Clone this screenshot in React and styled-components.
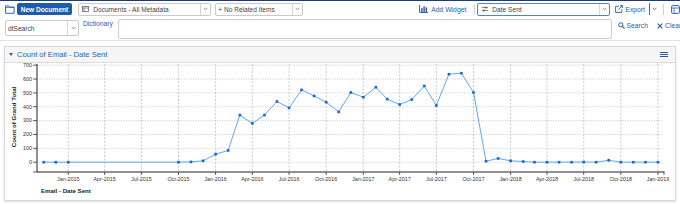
import React from 'react';
import styled, { createGlobalStyle } from 'styled-components';

const GlobalStyle = createGlobalStyle`
  html, body { margin: 0; padding: 0; background: #fff; }
  body {
    font-family: "Liberation Sans", Arial, sans-serif;
    width: 680px;
    height: 204px;
    overflow: hidden;
  }
`;

const BLUE = '#2b5ea8';

const Page = styled.div`
  width: 680px;
  height: 204px;
  overflow: hidden;
  box-sizing: border-box;
  border-top: 1px solid #1d3c73;
`;

const TopRow = styled.div`
  display: flex;
  align-items: center;
  height: 16px;
  padding-left: 5px;
  white-space: nowrap;
`;

const SearchRow = styled.div`
  display: flex;
  align-items: flex-start;
  height: 23px;
  padding-left: 5px;
  border-bottom: 1px solid #e2e2e2;
  white-space: nowrap;
`;

const PrimaryButton = styled.button`
  margin-left: 2px;
  width: 57px;
  height: 12px;
  padding: 0;
  border: none;
  border-radius: 2px;
  background: #1d5bab;
  color: #fff;
  font: bold 6.6px "Liberation Sans", Arial, sans-serif;
`;

const SelectBox = styled.div`
  display: flex;
  align-items: stretch;
  box-sizing: border-box;
  flex: none;
  width: ${p => p.$w}px;
  height: ${p => p.$h || 13}px;
  margin-left: ${p => p.$ml || 0}px;
  margin-top: ${p => p.$mt || 0}px;
  border: 1px solid ${p => (p.$active ? '#5581c6' : '#cacaca')};
  border-radius: 2px;
  background: #fff;
`;

const SelectLabel = styled.div`
  flex: 1;
  display: flex;
  align-items: center;
  gap: 4px;
  padding-left: ${p => p.$pl || 3}px;
  font-size: 6.6px;
  color: #444;
  overflow: hidden;
`;

const SelectArrow = styled.div`
  width: ${p => p.$w || 9}px;
  border-left: 1px solid #d4d4d4;
  display: flex;
  align-items: center;
  justify-content: center;
`;

const LinkAction = styled.div`
  display: flex;
  align-items: center;
  gap: ${p => p.$gap || 2}px;
  margin-left: ${p => p.$ml || 0}px;
  margin-top: ${p => p.$mt || 0}px;
  height: ${p => p.$h || 'auto'};
  font-size: 6.8px;
  color: ${BLUE};
  flex: none;
`;

const Divider = styled.div`
  width: 1px;
  height: ${p => p.$h || 10}px;
  margin-left: ${p => p.$ml || 0}px;
  background: ${p => p.$color || '#d0d0d0'};
  flex: none;
`;

const DictLink = styled.div`
  width: 35px;
  margin-left: 4px;
  margin-top: 3px;
  line-height: 8px;
  font-size: 6.7px;
  color: ${BLUE};
  flex: none;
`;

const QueryBox = styled.div`
  box-sizing: border-box;
  width: 494px;
  height: 20px;
  border: 1px solid #cdcdcd;
  border-radius: 2px;
  flex: none;
`;

const Panel = styled.section`
  box-sizing: border-box;
  width: 672px;
  height: 155px;
  margin: 5px 0 0 4px;
  border: 1px solid #d8d8d8;
  box-shadow: 0 1px 2px rgba(0, 0, 0, 0.12);
  display: flex;
  flex-direction: column;
`;

const PanelHeader = styled.header`
  display: flex;
  align-items: center;
  height: 15px;
  padding: 0 7px 0 4px;
  background: #f5f5f5;
  border-bottom: 1px solid #dcdcdc;
  flex: none;
`;

const PanelTitle = styled.div`
  display: flex;
  align-items: center;
  gap: 4px;
  flex: 1;
  font-size: 7.6px;
  color: #2b63ad;
`;

const Caret = styled.span`
  width: 0;
  height: 0;
  border-left: 2.5px solid transparent;
  border-right: 2.5px solid transparent;
  border-top: 3.5px solid #2b63ad;
`;

const MenuBars = styled.div`
  display: flex;
  flex-direction: column;
  gap: 0.8px;
  width: 8px;
  & > span {
    height: 1.2px;
    background: #2a5894;
  }
`;

const ChartWrap = styled.div`
  flex: 1;
  position: relative;
`;

const Chevron = ({ color = '#777' }) => (
  <svg width="5" height="4" viewBox="0 0 5 4">
    <polyline points="0.6,0.8 2.5,2.8 4.4,0.8" fill="none" stroke={color} strokeWidth="0.8" />
  </svg>
);

const FolderIcon = () => (
  <svg width="10" height="9" viewBox="0 0 10 9">
    <path d="M0.6 0.8 H3.8 L4.8 2 H9.4 V8.4 H0.6 Z" fill="none" stroke={BLUE} strokeWidth="1" />
    <path d="M0.6 2.4 H9.4" stroke={BLUE} strokeWidth="0.8" />
  </svg>
);

const DocIcon = () => (
  <svg width="7" height="6" viewBox="0 0 7 6">
    <rect x="0.5" y="0.5" width="6" height="5" fill="none" stroke="#666" strokeWidth="0.8" />
    <path d="M0.5 2 H6.5 M2 2 V5.5" stroke="#666" strokeWidth="0.8" />
  </svg>
);

const SlidersIcon = () => (
  <svg width="6" height="6" viewBox="0 0 6 6">
    <path d="M0 1.5 H6 M0 4.5 H6" stroke="#555" strokeWidth="0.7" />
    <rect x="3.4" y="0.5" width="1.2" height="2" fill="#555" />
    <rect x="1.2" y="3.5" width="1.2" height="2" fill="#555" />
  </svg>
);

const WidgetIcon = () => (
  <svg width="9" height="8" viewBox="0 0 9 8">
    <path d="M0.6 0 V7.4 H9" fill="none" stroke={BLUE} strokeWidth="1" />
    <rect x="2.2" y="3" width="1.4" height="4" fill={BLUE} />
    <rect x="4.4" y="1.2" width="1.4" height="5.8" fill={BLUE} />
    <rect x="6.6" y="2.4" width="1.4" height="4.6" fill={BLUE} />
  </svg>
);

const ExportIcon = () => (
  <svg width="8" height="8" viewBox="0 0 8 8">
    <path d="M4 1.2 H0.6 V7.4 H6.8 V4.2" fill="none" stroke={BLUE} strokeWidth="0.9" />
    <path d="M3.4 4.6 L7.4 0.6 M5 0.6 H7.4 V3" fill="none" stroke={BLUE} strokeWidth="0.9" />
  </svg>
);

const GridIcon = () => (
  <svg width="9" height="9" viewBox="0 0 9 9">
    <rect x="0.6" y="0.6" width="7.8" height="7.8" rx="1" fill="none" stroke={BLUE} strokeWidth="1" />
    <path d="M0.6 3 H8.4 M3 3 V8.4" stroke={BLUE} strokeWidth="0.8" />
  </svg>
);

const SearchIcon = () => (
  <svg width="7" height="7" viewBox="0 0 7 7">
    <circle cx="2.8" cy="2.8" r="2.1" fill="none" stroke={BLUE} strokeWidth="1" />
    <path d="M4.3 4.3 L6.6 6.6" stroke={BLUE} strokeWidth="1.2" />
  </svg>
);

const CloseIcon = () => (
  <svg width="6" height="6" viewBox="0 0 6 6">
    <path d="M0.7 0.7 L5.3 5.3 M5.3 0.7 L0.7 5.3" stroke={BLUE} strokeWidth="1.2" />
  </svg>
);

// --- chart ---
const DAY = 86400000;
const BASE = Date.UTC(2015, 0, 1);
const xOf = (y, m) => 68.3 + ((Date.UTC(y, m - 1, 1) - BASE) / DAY) * 0.4036;
const yOf = v => 162.2 - v * 0.1386;

const series = [
  [2014, 11, 0], [2014, 12, 0], [2015, 1, 0],
  [2015, 10, 0], [2015, 11, 2], [2015, 12, 10],
  [2016, 1, 58], [2016, 2, 85], [2016, 3, 340], [2016, 4, 280], [2016, 5, 340], [2016, 6, 438],
  [2016, 7, 392], [2016, 8, 522], [2016, 9, 478], [2016, 10, 433], [2016, 11, 363], [2016, 12, 503],
  [2017, 1, 469], [2017, 2, 541], [2017, 3, 455], [2017, 4, 416], [2017, 5, 452], [2017, 6, 550],
  [2017, 7, 409], [2017, 8, 635], [2017, 9, 642], [2017, 10, 503], [2017, 11, 7], [2017, 12, 27],
  [2018, 1, 10], [2018, 2, 5], [2018, 3, 0], [2018, 4, 0], [2018, 5, 0], [2018, 6, 0],
  [2018, 7, 1], [2018, 8, 0], [2018, 9, 14], [2018, 10, 0], [2018, 11, 0], [2018, 12, 0],
  [2019, 1, 0],
];

const MONTHS = ['Jan', 'Apr', 'Jul', 'Oct'];
const quarters = [];
for (let yr = 2015; yr <= 2019; yr++) {
  for (let q = 0; q < 4; q++) {
    if (yr === 2019 && q > 0) break;
    quarters.push({ x: xOf(yr, q * 3 + 1), label: `${MONTHS[q]}-${yr}` });
  }
}

const LEFT = 37;
const RIGHT = 664;
const TOP = 64;
const AXIS_Y = 172;

const Chart = () => {
  const pts = series.map(([y, m, v]) => [xOf(y, m), yOf(v)]);
  return (
    <svg width="670" height="137" viewBox="5 63 670 137" style={{ display: 'block' }}>
      {[0, 100, 200, 300, 400, 500, 600, 700].map(v => (
        <g key={v}>
          <line x1={LEFT} x2={RIGHT - 1} y1={yOf(v)} y2={yOf(v)} stroke="#c6c6c6" strokeWidth="0.8" strokeDasharray="1.2 1.2" />
          <line x1={33} x2={LEFT} y1={yOf(v)} y2={yOf(v)} stroke="#333" strokeWidth="0.8" />
          <text x={32} y={yOf(v) + 1.8} fontSize="5.4" textAnchor="end" fill="#333" fontFamily="Liberation Sans, Arial, sans-serif">{v}</text>
        </g>
      ))}
      {quarters.map(q => (
        <g key={q.label}>
          <line x1={q.x} x2={q.x} y1={TOP} y2={AXIS_Y} stroke="#bcbcbc" strokeWidth="0.8" strokeDasharray="2 1.5" />
          <line x1={q.x} x2={q.x} y1={AXIS_Y} y2={AXIS_Y + 3} stroke="#333" strokeWidth="0.8" />
          <text x={q.x} y={180.8} fontSize="5.4" textAnchor="middle" fill="#333" fontFamily="Liberation Sans, Arial, sans-serif">{q.label}</text>
        </g>
      ))}
      <line x1={33} x2={LEFT} y1={AXIS_Y} y2={AXIS_Y} stroke="#333" strokeWidth="0.8" />
      <line x1={LEFT} x2={LEFT} y1={TOP} y2={AXIS_Y} stroke="#222" strokeWidth="1" />
      <line x1={LEFT} x2={RIGHT} y1={AXIS_Y} y2={AXIS_Y} stroke="#222" strokeWidth="1" />
      <line x1={RIGHT} x2={RIGHT} y1={AXIS_Y - 1} y2={AXIS_Y + 3} stroke="#333" strokeWidth="0.8" />
      <polyline points={pts.map(p => p.join(',')).join(' ')} fill="none" stroke="#5ea8f7" strokeWidth="1" />
      {pts.map(([x, y], i) => (
        <rect key={i} x={x - 1.3} y={y - 1.3} width="2.6" height="2.6" fill="#1266e0" />
      ))}
      <text x={15.5} y={117} fontSize="6.1" fontWeight="bold" fill="#222" textAnchor="middle"
        transform="rotate(-90 15.5 117)" fontFamily="Liberation Sans, Arial, sans-serif">Count of Grand Total</text>
      <text x={41} y={193} fontSize="6.1" fontWeight="bold" fill="#222" fontFamily="Liberation Sans, Arial, sans-serif">Email - Date Sent</text>
    </svg>
  );
};

export default function App() {
  return (
    <>
      <GlobalStyle />
      <Page>
        <TopRow>
          <FolderIcon />
          <PrimaryButton>New Document</PrimaryButton>
          <SelectBox $w={133} $ml={6}>
            <SelectLabel $pl={3}><DocIcon />Documents - All Metadata</SelectLabel>
            <SelectArrow><Chevron /></SelectArrow>
          </SelectBox>
          <SelectBox $w={88} $ml={4}>
            <SelectLabel $pl={2}>+ No Related Items</SelectLabel>
            <SelectArrow><Chevron /></SelectArrow>
          </SelectBox>
          <LinkAction $ml={116} $gap={3}><WidgetIcon />Add Widget</LinkAction>
          <Divider $ml={8} />
          <SelectBox $w={133} $ml={2} $active>
            <SelectLabel $pl={4}><SlidersIcon />Date Sent</SelectLabel>
            <SelectArrow><Chevron /></SelectArrow>
          </SelectBox>
          <LinkAction $ml={5}><ExportIcon />Export</LinkAction>
          <Divider $ml={4} $h={12} $color="#3d6db3" />
          <LinkAction $ml={2}><Chevron color="#555" /></LinkAction>
          <Divider $ml={6} $h={11} />
          <LinkAction $ml={7}><GridIcon /></LinkAction>
        </TopRow>
        <SearchRow>
          <SelectBox $w={74} $h={16} $mt={3}>
            <SelectLabel $pl={2}>dtSearch</SelectLabel>
            <SelectArrow $w={10}><Chevron /></SelectArrow>
          </SelectBox>
          <DictLink>Dictionary</DictLink>
          <QueryBox style={{ marginTop: 2 }} />
          <LinkAction $ml={6} $mt={5} $gap={1.5}><SearchIcon />Search</LinkAction>
          <LinkAction $ml={9} $mt={5} $gap={2}><CloseIcon />Clear</LinkAction>
        </SearchRow>
        <Panel>
          <PanelHeader>
            <PanelTitle><Caret />Count of Email - Date Sent</PanelTitle>
            <MenuBars><span /><span /><span /></MenuBars>
          </PanelHeader>
          <ChartWrap>
            <Chart />
          </ChartWrap>
        </Panel>
      </Page>
    </>
  );
}
